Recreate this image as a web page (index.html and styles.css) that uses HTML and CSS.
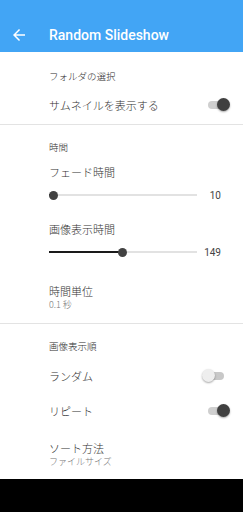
FILE: index.html
```html
<!DOCTYPE html>
<html lang="ja">
<head>
<meta charset="utf-8">
<link rel="stylesheet" href="styles.css">
</head>
<body>
<div class="screen">
  <header class="appbar">
    <svg class="back" viewBox="0 0 24 24" width="18" height="18"><path fill="#fff" d="M20 11H7.83l5.59-5.59L12 4l-8 8 8 8 1.41-1.41L7.83 13H20v-2z"/></svg>
    <div class="title">Random Slideshow</div>
  </header>
  <main class="content">
    <section class="sec sec1">
      <div class="cat">フォルダの選択</div>
      <div class="row sw-row">
        <span class="label">サムネイルを表示する</span>
        <span class="switch on"><span class="track"></span><span class="thumb"></span></span>
      </div>
    </section>
    <div class="divider"></div>
    <section class="sec sec2">
      <div class="cat">時間</div>
      <div class="label sl-title">フェード時間</div>
      <div class="slider-row">
        <div class="slider"><div class="fill" style="width:4px"></div><div class="knob" style="left:4px"></div></div>
        <span class="val">10</span>
      </div>
      <div class="label sl-title second">画像表示時間</div>
      <div class="slider-row">
        <div class="slider"><div class="fill" style="width:73px"></div><div class="knob" style="left:73px"></div></div>
        <span class="val">149</span>
      </div>
      <div class="two-line unit">
        <div class="label">時間単位</div>
        <div class="summary">0.1 秒</div>
      </div>
    </section>
    <div class="divider"></div>
    <section class="sec sec3">
      <div class="cat">画像表示順</div>
      <div class="row sw-row tall">
        <span class="label">ランダム</span>
        <span class="switch off"><span class="track"></span><span class="thumb"></span></span>
      </div>
      <div class="row sw-row tall">
        <span class="label">リピート</span>
        <span class="switch on"><span class="track"></span><span class="thumb"></span></span>
      </div>
      <div class="two-line sort">
        <div class="label">ソート方法</div>
        <div class="summary">ファイルサイズ</div>
      </div>
    </section>
  </main>
  <div class="navbar"></div>
</div>
</body>
</html>
```
FILE: styles.css
```css
html, body {
  margin: 0;
  padding: 0;
  background: #fff;
}
body {
  font-family: "Noto Sans CJK JP", Roboto, "Noto Sans", sans-serif;
  color: #222;
}
.screen {
  width: 243px;
  height: 512px;
  display: flex;
  flex-direction: column;
  overflow: hidden;
}
.appbar {
  height: 52px;
  flex: none;
  background: #42a5f5;
  display: flex;
  align-items: center;
  padding-top: 18px;
  box-sizing: border-box;
}
.back {
  margin-left: 10px;
  flex: none;
}
.title {
  margin-left: 21px;
  font-family: Roboto, "Noto Sans", sans-serif;
  font-weight: 500;
  font-size: 14px;
  color: #fff;
}
.content {
  flex: none;
  height: 427px;
  display: flex;
  flex-direction: column;
}
.navbar {
  flex: 1;
  background: #000;
}
.sec {
  padding-left: 49px;
  padding-right: 13px;
  display: flex;
  flex-direction: column;
}
.sec1 { padding-top: 10px; height: 62px; }
.sec2 { padding-top: 8px; height: 190px; }
.sec3 { padding-top: 10px; }
.divider {
  height: 1px;
  background: #e3e3e3;
  flex: none;
}
.cat {
  height: 28px;
  display: flex;
  align-items: center;
  font-size: 9.5px;
  font-weight: 300;
  color: #2e2e2e;
}
.sec3 .cat { height: 24px; }
.label {
  font-size: 11px;
  font-weight: 300;
  color: #333;
}
.row {
  display: flex;
  align-items: center;
  justify-content: space-between;
}
.sw-row { height: 30px; }
.sw-row.tall { height: 35px; }
.switch {
  position: relative;
  width: 28px;
  height: 14px;
  flex: none;
}
.track {
  position: absolute;
  left: 6px;
  top: 3px;
  width: 16px;
  height: 8px;
  border-radius: 4px;
  background: #c8c8c8;
}
.switch.on .track { background: #cfcfcf; }
.thumb {
  position: absolute;
  top: 0;
  width: 13px;
  height: 13px;
  border-radius: 50%;
  box-shadow: 0 1px 2px rgba(0,0,0,0.35);
}
.switch.on .thumb { right: 0; background: #404040; }
.switch.off .thumb { left: 0; background: #eeeeee; }
.sl-title {
  height: 22px;
  display: flex;
  align-items: center;
}
.sl-title.second { margin-top: 11px; }
.slider-row {
  height: 24px;
  display: flex;
  align-items: center;
}
.slider {
  position: relative;
  width: 148px;
  height: 2px;
  background: #e2e2e2;
}
.fill {
  position: absolute;
  left: 0;
  top: 0;
  height: 2px;
  background: #1a1a1a;
}
.knob {
  position: absolute;
  top: -3.5px;
  width: 9px;
  height: 9px;
  margin-left: -4.5px;
  border-radius: 50%;
  background: #424242;
}
.val {
  flex: 1;
  text-align: right;
  margin-right: 9px;
  font-family: Roboto, "Noto Sans", sans-serif;
  font-size: 10px;
  color: #444;
}
.two-line {
  display: flex;
  flex-direction: column;
}
.two-line .label {
  line-height: 16px;
}
.summary {
  font-size: 9px;
  font-weight: 300;
  line-height: 12px;
  color: #777;
}
.unit { margin-top: 19px; }
.sort { margin-top: 12px; }
```
